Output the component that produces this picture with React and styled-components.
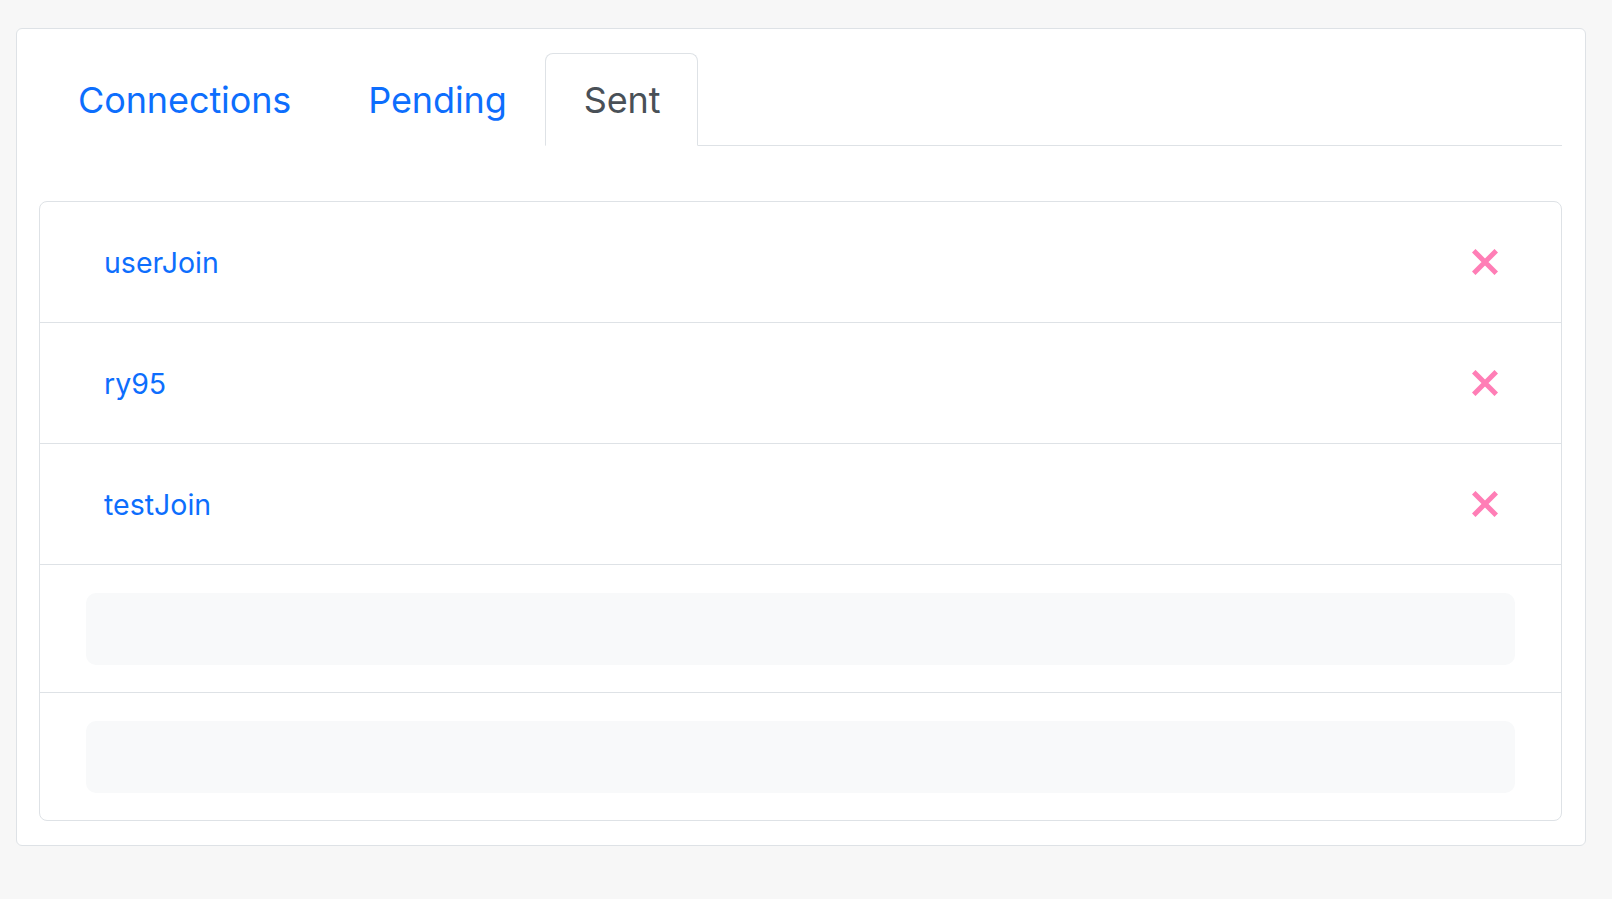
import React, { useState } from "react";
import styled, { createGlobalStyle } from "styled-components";

const GlobalStyle = createGlobalStyle`
  body {
    margin: 0;
    background: #f7f7f7;
    font-family: Inter, "Liberation Sans", sans-serif;
  }
`;

const Page = styled.div`
  padding: 28px 26px 54px 16px;
`;

const Card = styled.div`
  background: #ffffff;
  border: 1px solid #dee2e6;
  border-radius: 6px;
  padding: 24px 23px 24px 22px;
`;

const TabBar = styled.div`
  display: flex;
  border-bottom: 1px solid #dee2e6;
`;

const Tab = styled.button`
  height: 93px;
  padding: 0 37px 0 38px;
  margin-bottom: -1px;
  font-family: inherit;
  font-size: 36px;
  font-weight: 400;
  letter-spacing: -0.1px;
  cursor: pointer;
  background: #ffffff;
  border: 1px solid ${({ active }) => (active ? "#dee2e6" : "transparent")};
  border-bottom-color: ${({ active }) => (active ? "#ffffff" : "transparent")};
  border-radius: 8px 8px 0 0;
  color: ${({ active }) => (active ? "#495057" : "#0d6efd")};
`;

const List = styled.div`
  margin-top: 55px;
  border: 1px solid #dee2e6;
  border-radius: 8px;
`;

const Row = styled.div`
  display: flex;
  align-items: center;
  justify-content: space-between;
  height: 120px;
  padding: 0 63px 0 64px;
  border-bottom: 1px solid #dee2e6;
`;

const Name = styled.span`
  color: #0d6efd;
  font-size: 28.5px;
`;

const RemoveBtn = styled.button`
  display: flex;
  padding: 0;
  border: none;
  background: none;
  cursor: pointer;
`;

const SkeletonRow = styled.div`
  padding: 28px 46px 27px;
  border-bottom: 1px solid #dee2e6;

  &:last-child {
    border-bottom: none;
  }
`;

const Skeleton = styled.div`
  height: 72px;
  border-radius: 10px;
  background: #f8f9fa;
`;

const CrossIcon = () => (
  <svg width="26" height="26" viewBox="0 0 26 26">
    <path
      d="M3.5 3.5 L22.5 22.5 M22.5 3.5 L3.5 22.5"
      stroke="#ff7eb6"
      strokeWidth="5"
      strokeLinecap="square"
    />
  </svg>
);

const sent = ["userJoin", "ry95", "testJoin"];

const App = () => {
  const [tab, setTab] = useState("Sent");

  return (
    <>
      <GlobalStyle />
      <Page>
        <Card>
          <TabBar>
            {["Connections", "Pending", "Sent"].map((t) => (
              <Tab key={t} active={tab === t ? 1 : 0} onClick={() => setTab(t)}>
                {t}
              </Tab>
            ))}
          </TabBar>
          <List>
            {sent.map((name) => (
              <Row key={name}>
                <Name>{name}</Name>
                <RemoveBtn>
                  <CrossIcon />
                </RemoveBtn>
              </Row>
            ))}
            <SkeletonRow>
              <Skeleton />
            </SkeletonRow>
            <SkeletonRow>
              <Skeleton />
            </SkeletonRow>
          </List>
        </Card>
      </Page>
    </>
  );
};

export default App;
